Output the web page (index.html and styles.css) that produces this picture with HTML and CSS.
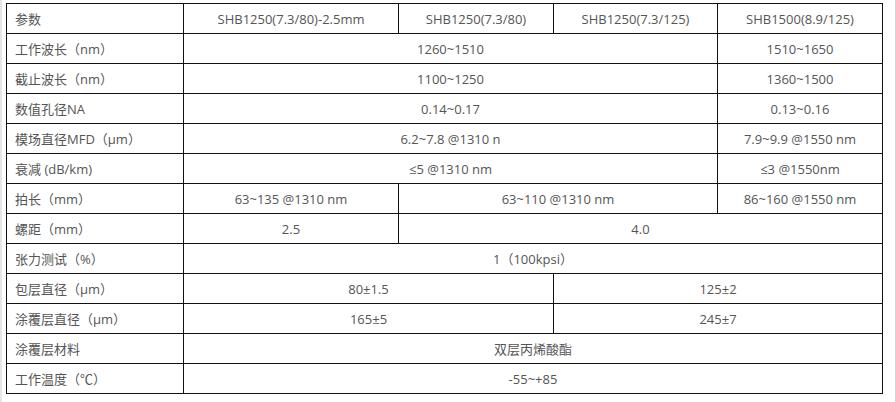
FILE: index.html
```html
<!DOCTYPE html>
<html lang="zh">
<head>
<meta charset="utf-8">
<link rel="stylesheet" href="styles.css">
</head>
<body>
<div class="page">
<table class="spec">
<colgroup>
<col class="c1"><col class="c2"><col class="c3"><col class="c4"><col class="c5">
</colgroup>
<tbody>
<tr><td class="lab">参数</td><td>SHB1250(7.3/80)-2.5mm</td><td>SHB1250(7.3/80)</td><td>SHB1250(7.3/125)</td><td>SHB1500(8.9/125)</td></tr>
<tr><td class="lab">工作波长（nm）</td><td colspan="3">1260~1510</td><td>1510~1650</td></tr>
<tr><td class="lab">截止波长（nm）</td><td colspan="3">1100~1250</td><td>1360~1500</td></tr>
<tr><td class="lab">数值孔径NA</td><td colspan="3">0.14~0.17</td><td>0.13~0.16</td></tr>
<tr><td class="lab">模场直径MFD（μm）</td><td colspan="3">6.2~7.8 @1310 n</td><td>7.9~9.9 @1550 nm</td></tr>
<tr><td class="lab">衰减 (dB/km)</td><td colspan="3">≤5 @1310 nm</td><td>≤3 @1550nm</td></tr>
<tr><td class="lab">拍长（mm）</td><td>63~135 @1310 nm</td><td colspan="2">63~110 @1310 nm</td><td>86~160 @1550 nm</td></tr>
<tr><td class="lab">螺距（mm）</td><td>2.5</td><td colspan="3">4.0</td></tr>
<tr><td class="lab">张力测试（%）</td><td colspan="4">1（100kpsi）</td></tr>
<tr><td class="lab">包层直径（μm）</td><td colspan="2">80±1.5</td><td colspan="2">125±2</td></tr>
<tr><td class="lab">涂覆层直径（μm）</td><td colspan="2">165±5</td><td colspan="2">245±7</td></tr>
<tr><td class="lab">涂覆层材料</td><td colspan="4">双层丙烯酸酯</td></tr>
<tr><td class="lab">工作温度（℃）</td><td colspan="4">-55~+85</td></tr>
</tbody>
</table>
</div>
</body>
</html>
```
FILE: styles.css
```css
html, body {
  margin: 0;
  padding: 0;
  background: #fff;
}
.page {
  width: 893px;
  height: 402px;
  border-left: 2px solid #e6e6e6;
  box-sizing: border-box;
  padding: 3px 0 0 4px;
  font-family: "Open Sans", "Noto Sans CJK SC", sans-serif;
  font-size: 13px;
  color: #555;
}
.spec {
  border-collapse: collapse;
  table-layout: fixed;
  width: 876px;
}
.c1 { width: 177px; }
.c2 { width: 215px; }
.c3 { width: 155px; }
.c4 { width: 164px; }
.c5 { width: 165px; }
.spec td {
  border: 1px solid #111;
  height: 30px;
  padding: 0 8px;
  text-align: center;
  vertical-align: middle;
  white-space: nowrap;
  line-height: 18px;
  box-sizing: border-box;
}
.spec td.lab {
  text-align: left;
  padding-left: 8px;
}
```
